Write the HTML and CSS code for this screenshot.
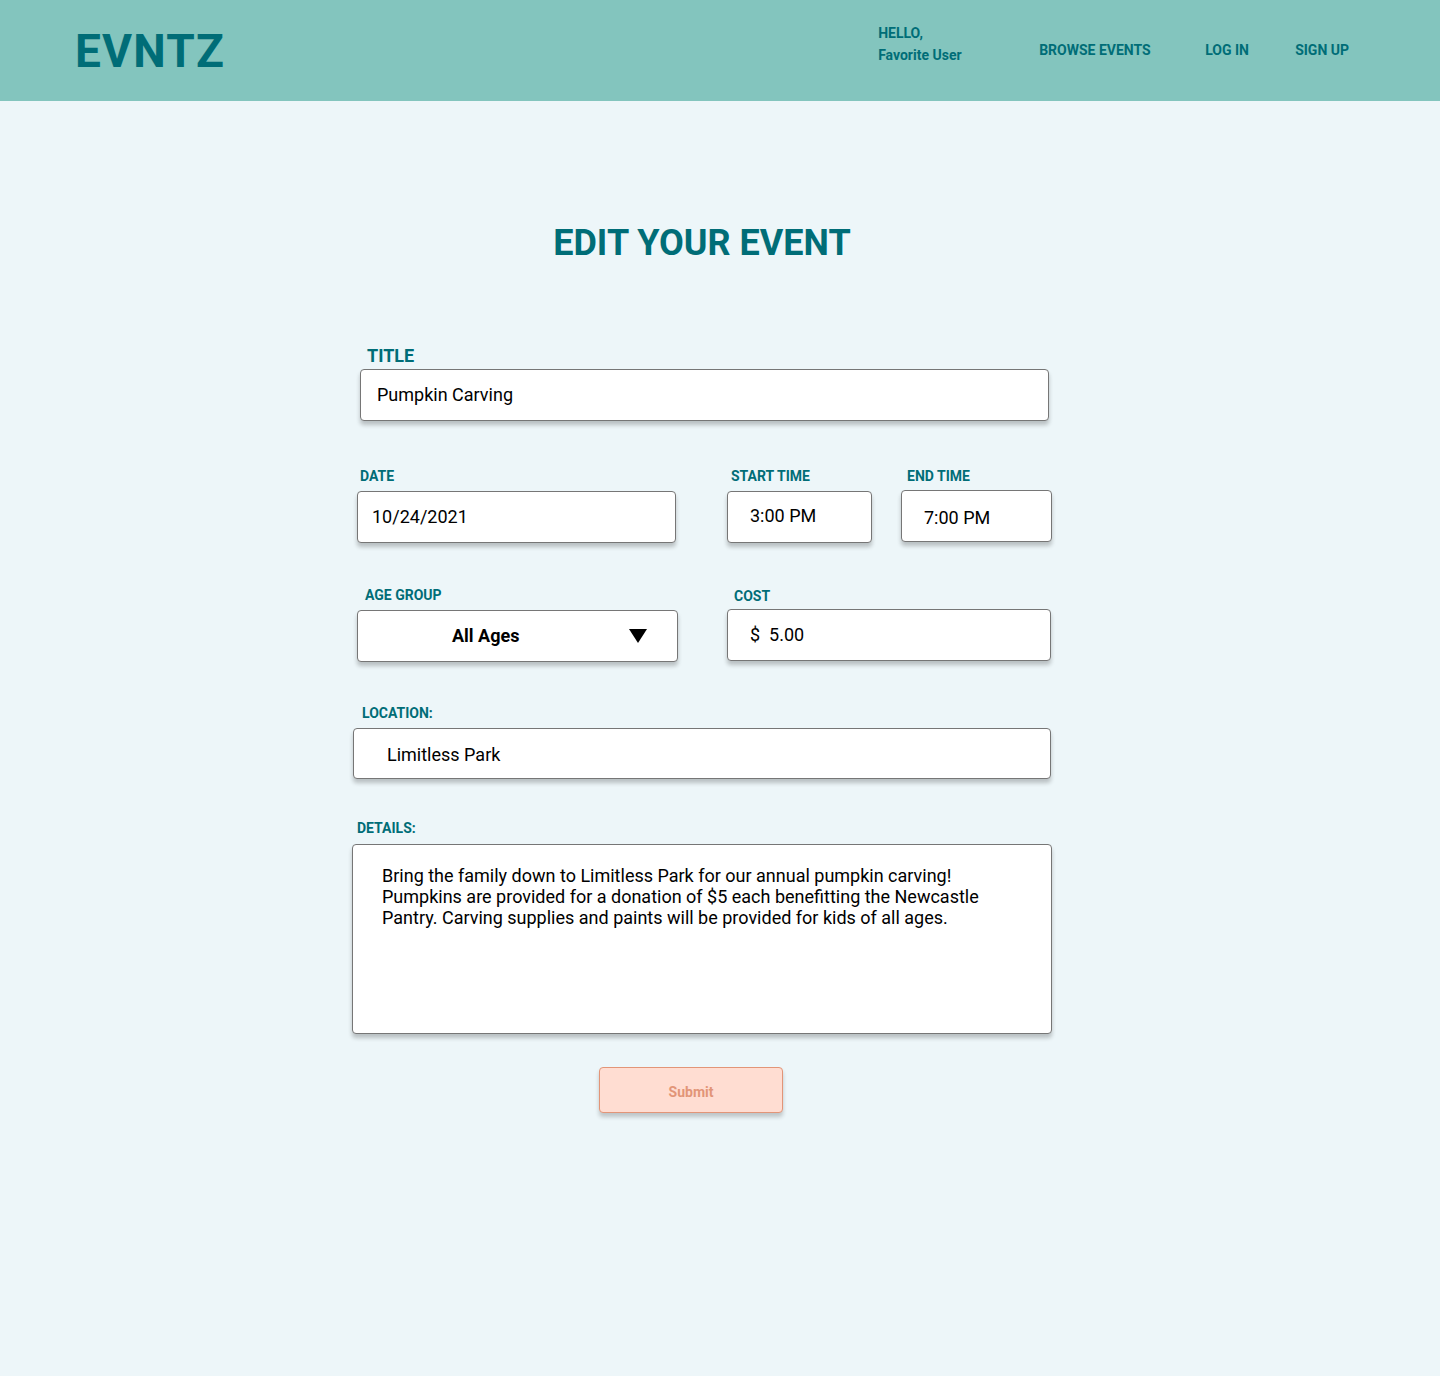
FILE: index.html
```html
<!DOCTYPE html>
<html lang="en">
<head>
<meta charset="utf-8">
<title>EVNTZ - Edit your event</title>
<link rel="stylesheet" href="styles.css">
</head>
<body>
<header class="topbar">
  <div class="logo">EVNTZ</div>
  <nav class="nav">
    <div class="nav-hello">HELLO,<br>Favorite User</div>
    <a class="nav-link nav-browse" href="#">BROWSE EVENTS</a>
    <a class="nav-link nav-login" href="#">LOG IN</a>
    <a class="nav-link nav-signup" href="#">SIGN UP</a>
  </nav>
</header>

<main class="main">
  <h1 class="page-title">EDIT YOUR EVENT</h1>

  <form class="form">
    <div class="field field-title">
      <label class="label label-lg">TITLE</label>
      <div class="box box-title">Pumpkin Carving</div>
    </div>

    <div class="row row-date">
      <div class="field field-date">
        <label class="label">DATE</label>
        <div class="box box-date">10/24/2021</div>
      </div>
      <div class="field field-start">
        <label class="label">START TIME</label>
        <div class="box box-start">3:00 PM</div>
      </div>
      <div class="field field-end">
        <label class="label">END TIME</label>
        <div class="box box-end">7:00 PM</div>
      </div>
    </div>

    <div class="row row-age">
      <div class="field field-age">
        <label class="label">AGE GROUP</label>
        <div class="box box-select">
          <span class="select-value">All Ages</span>
          <svg class="caret" width="18" height="14" viewBox="0 0 18 14"><polygon points="0,0 18,0 9,14" fill="#000"/></svg>
        </div>
      </div>
      <div class="field field-cost">
        <label class="label">COST</label>
        <div class="box box-cost">$&nbsp;&nbsp;5.00</div>
      </div>
    </div>

    <div class="field field-location">
      <label class="label">LOCATION:</label>
      <div class="box box-location">Limitless Park</div>
    </div>

    <div class="field field-details">
      <label class="label">DETAILS:</label>
      <div class="box box-details">Bring the family down to Limitless Park for our annual pumpkin carving! Pumpkins are provided for a donation of $5 each benefitting the Newcastle Pantry. Carving supplies and paints will be provided for kids of all ages.</div>
    </div>

    <div class="submit-row">
      <button type="button" class="submit">Submit</button>
    </div>
  </form>
</main>
</body>
</html>
```

FILE: styles.css
```css
* { box-sizing: border-box; }

body {
  margin: 0;
  background: #EDF6F9;
  font-family: Roboto, "Noto Sans", Arial, sans-serif;
  min-height: 1376px;
}

/* Header */
.topbar {
  height: 101px;
  background: #83C5BE;
  display: flex;
  align-items: center;
  padding-left: 75px;
}
.logo {
  font-size: 46px;
  font-weight: 700;
  color: #006D77;
  letter-spacing: 1.2px;
  line-height: 1;
}
.nav {
  margin-left: auto;
  display: flex;
  align-items: center;
  padding-right: 91px;
}
.nav-hello {
  width: 161px;
  font-size: 14px;
  font-weight: 700;
  line-height: 22px;
  color: #006D77;
  margin-bottom: 14px;
}
.nav-link {
  font-size: 14px;
  font-weight: 700;
  color: #006D77;
  text-decoration: none;
  line-height: 22px;
  margin-bottom: 2px;
}
.nav-browse { width: 166px; }
.nav-login { width: 90px; }

/* Main */
.main {
  width: 700px;
  margin-left: calc(50% - 368px);
  padding-top: 122px;
  padding-bottom: 40px;
}
.page-title {
  margin: 0;
  text-align: center;
  font-size: 36px;
  line-height: 41px;
  font-weight: 700;
  color: #006D77;
}

.form {
  display: flex;
  flex-direction: column;
  margin-top: 81px;
}
.field {
  display: flex;
  flex-direction: column;
}
.label {
  font-size: 14px;
  line-height: 16px;
  font-weight: 700;
  color: #006D77;
  margin-bottom: 8px;
}
.label-lg {
  font-size: 18px;
  line-height: 21px;
  margin-bottom: 3px;
}

.box {
  background: #fff;
  border: 1px solid #767676;
  border-radius: 4px;
  box-shadow: 0 4px 4px rgba(0, 0, 0, 0.22);
  font-size: 18px;
  color: #000;
  height: 52px;
  display: flex;
  align-items: center;
  padding-bottom: 2px;
}

.field-title .label { margin-left: 15px; }
.box-title { margin-left: 8px; width: 689px; padding-left: 16px; }

.row {
  display: flex;
  align-items: flex-start;
}
.row-date { margin-top: 46px; }
.field-date { margin-left: 5px; }
.field-date .label { margin-left: 3px; margin-top: 1px; margin-bottom: 7px; }
.box-date { width: 319px; padding-left: 14px; }
.field-start { margin-left: 51px; }
.field-start .label { margin-left: 4px; margin-top: 1px; margin-bottom: 7px; }
.box-start { width: 145px; padding-left: 22px; padding-bottom: 4px; }
.field-end { margin-left: 29px; margin-top: 1px; }
.field-end .label { margin-left: 6px; margin-bottom: 6px; }
.box-end { width: 151px; padding-left: 22px; padding-top: 2px; padding-bottom: 0; }

.row-age { margin-top: 44px; }
.field-age { margin-left: 5px; }
.field-age .label { margin-left: 8px; margin-bottom: 7px; }
.box-select {
  width: 321px;
  padding-left: 94px;
  padding-right: 30px;
  font-weight: 700;
}
.caret { margin-left: auto; margin-top: 2px; }
.field-cost { margin-left: 49px; margin-top: 1px; }
.field-cost .label { margin-left: 7px; margin-bottom: 5px; }
.box-cost { width: 324px; padding-left: 22px; }

.field-location { margin-top: 43px; margin-left: 1px; }
.field-location .label { margin-left: 9px; margin-bottom: 7px; }
.box-location { width: 698px; height: 51px; padding-left: 33px; padding-top: 1px; padding-bottom: 0; }

.field-details { margin-top: 41px; }
.field-details .label { margin-left: 5px; }
.box-details {
  width: 700px;
  height: 190px;
  display: block;
  padding: 20px 60px 0 29px;
  line-height: 21px;
}

.submit-row {
  margin-top: 33px;
  display: flex;
  padding-left: 247px;
}
.submit {
  width: 184px;
  height: 46px;
  background: #FFDDD2;
  border: 1px solid #E29578;
  border-radius: 4px;
  box-shadow: 0 4px 4px rgba(0, 0, 0, 0.2);
  color: #E29578;
  font-family: Roboto, "Noto Sans", Arial, sans-serif;
  font-size: 14px;
  font-weight: 700;
  padding-top: 4px;
  cursor: pointer;
}
```
